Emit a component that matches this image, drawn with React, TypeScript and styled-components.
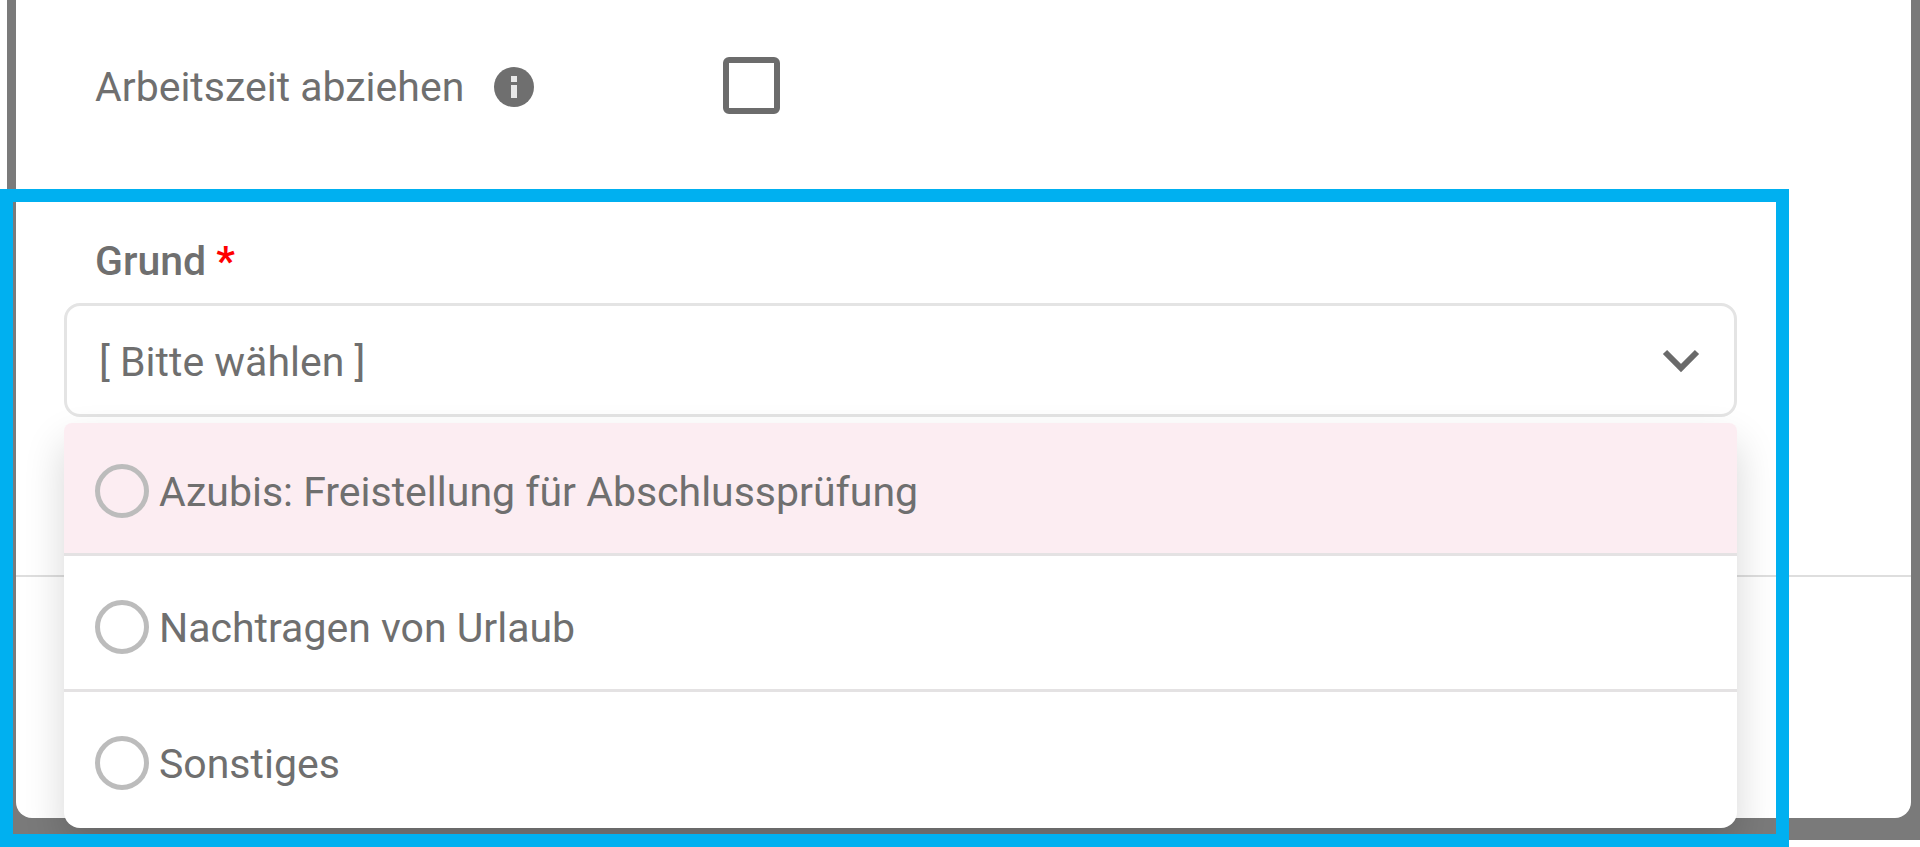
import React, { useState } from "react";
import styled, { createGlobalStyle } from "styled-components";

const GlobalStyle = createGlobalStyle`
  *, *::before, *::after { box-sizing: border-box; }
  body {
    margin: 0;
    background: #fff;
    color: #6f6f6f;
    font-family: Roboto, "Liberation Sans", sans-serif;
    font-size: 41px;
    line-height: 48px;
  }
`;

const Page = styled.div`
  position: relative;
  padding: 0 0 7px 7px;
`;

const Backdrop = styled.div`
  padding: 0 9px 22px 9px;
  background: #7a7a7a;
`;

const Dialog = styled.main`
  background: #fff;
  border-radius: 0 0 16px 16px;
`;

const DialogBody = styled.div`
  padding: 57px 174px 158px 48px;
  border-bottom: 2px solid #dedede;
`;

const DialogFooter = styled.footer`
  height: 241px;
`;

const CheckRow = styled.div`
  display: grid;
  grid-template-columns: 628px 1fr;
  align-items: center;
  padding-left: 31px;
`;

const CheckLabel = styled.div`
  display: flex;
  align-items: center;
  gap: 30px;
  padding-top: 3px;
`;

const InfoButton = styled.button`
  display: flex;
  padding: 0;
  border: 0;
  background: none;
  color: inherit;
`;

const Checkbox = styled.input`
  appearance: none;
  width: 57px;
  height: 57px;
  margin: 0;
  border: 6px solid #6c6c6c;
  border-radius: 6px;
  background: #fff;

  &:checked { background: #6c6c6c; }
`;

const Field = styled.div`
  margin-top: 123px;
`;

const FieldLabel = styled.label`
  display: block;
  padding: 0 31px;
  margin-bottom: 18px;
  font-weight: 500;
`;

const Required = styled.span`
  color: #f00;
  font-weight: 700;
`;

const SelectBox = styled.div`
  position: relative;
`;

const Select = styled.select`
  appearance: none;
  display: block;
  width: 100%;
  height: 114px;
  padding: 4px 96px 0 32px;
  border: 3px solid #e4e4e4;
  border-radius: 16px;
  background: #fff;
  color: inherit;
  font: inherit;
`;

const Chevron = styled.svg`
  position: absolute;
  top: 46px;
  right: 37px;
  pointer-events: none;
`;

const Menu = styled.div`
  position: absolute;
  top: calc(100% + 6px);
  left: 0;
  right: 0;
  border-radius: 8px 8px 16px 16px;
  background: #fff;
  box-shadow: 0 20px 40px rgba(0, 0, 0, 0.16);
`;

const Option = styled.label<{ $active?: boolean }>`
  display: flex;
  align-items: center;
  gap: 10px;
  padding: 44px 31px 35px;
  border-bottom: 3px solid #e4e2e3;
  background: ${(p) => (p.$active ? "#fcedf2" : "transparent")};

  &:first-child {
    padding-top: 41px;
    border-radius: 8px 8px 0 0;
  }
  &:last-child { border-bottom-color: transparent; }
`;

const OptionText = styled.span`
  padding-top: 2px;
`;

const Radio = styled.input`
  appearance: none;
  width: 54px;
  height: 54px;
  margin: 0;
  border: 5px solid #bcbcbc;
  border-radius: 50%;

  &:checked { background: #bcbcbc; }
`;

const Highlight = styled.div`
  position: absolute;
  inset: 189px 131px 0 0;
  border: 13px solid #00b0f0;
  pointer-events: none;
`;

const reasons = [
  "Azubis: Freistellung für Abschlussprüfung",
  "Nachtragen von Urlaub",
  "Sonstiges",
];

export default function App() {
  const [reason, setReason] = useState("");
  return (
    <Page>
      <GlobalStyle />
      <Backdrop>
        <Dialog>
          <DialogBody>
            <CheckRow>
              <CheckLabel>
                <label htmlFor="deduct">Arbeitszeit abziehen</label>
                <InfoButton type="button" aria-label="Info">
                  <svg width="40" height="40" viewBox="0 0 40 40" aria-hidden="true">
                    <circle cx="20" cy="20" r="20" fill="currentColor" />
                    <path d="M17 9h6v6h-6zM17 18h6v13h-6z" fill="#e8e8e8" />
                  </svg>
                </InfoButton>
              </CheckLabel>
              <Checkbox id="deduct" type="checkbox" />
            </CheckRow>
            <Field>
              <FieldLabel htmlFor="reason">
                Grund <Required>*</Required>
              </FieldLabel>
              <SelectBox>
                <Select id="reason" value={reason} onChange={(e) => setReason(e.target.value)}>
                  <option value="">[ Bitte wählen ]</option>
                  {reasons.map((r) => (
                    <option key={r}>{r}</option>
                  ))}
                </Select>
                <Chevron width="38" height="24" viewBox="0 0 38 24" aria-hidden="true">
                  <path d="M3 3l16 16 16-16" fill="none" stroke="#6a6a6a" strokeWidth="6" />
                </Chevron>
                <Menu role="radiogroup" aria-label="Grund">
                  {reasons.map((r, i) => (
                    <Option key={r} $active={i === 0}>
                      <Radio
                        type="radio"
                        name="reason-option"
                        checked={reason === r}
                        onChange={() => setReason(r)}
                      />
                      <OptionText>{r}</OptionText>
                    </Option>
                  ))}
                </Menu>
              </SelectBox>
            </Field>
          </DialogBody>
          <DialogFooter />
        </Dialog>
      </Backdrop>
      <Highlight />
    </Page>
  );
}
